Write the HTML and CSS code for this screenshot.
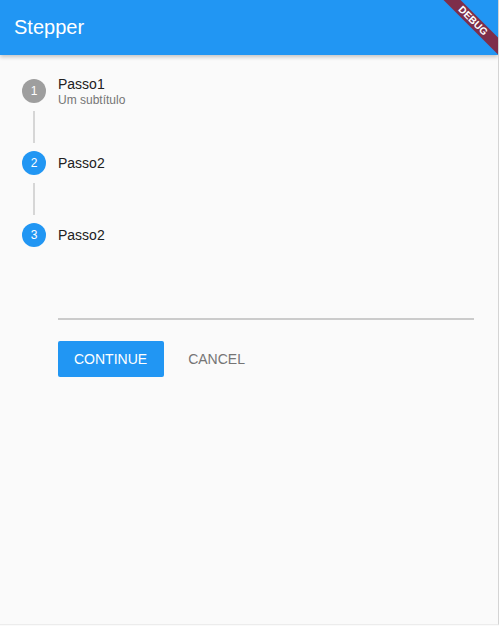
FILE: index.html
```html
<!DOCTYPE html>
<html>
<head>
<meta charset="utf-8">
<link rel="stylesheet" href="styles.css">
</head>
<body>
<div class="app">
  <header class="appbar">
    <span class="title">Stepper</span>
    <div class="banner"><span>DEBUG</span></div>
  </header>
  <main class="stepper">
    <div class="step">
      <div class="head">
        <div class="circle grey">1</div>
        <div class="labels">
          <div class="step-title">Passo1</div>
          <div class="step-sub">Um subtítulo</div>
        </div>
      </div>
      <div class="connector"><div class="line"></div></div>
    </div>
    <div class="step">
      <div class="head">
        <div class="circle">2</div>
        <div class="labels">
          <div class="step-title">Passo2</div>
        </div>
      </div>
      <div class="connector"><div class="line"></div></div>
    </div>
    <div class="step">
      <div class="head">
        <div class="circle">3</div>
        <div class="labels">
          <div class="step-title">Passo2</div>
        </div>
      </div>
      <div class="content">
        <div class="field"></div>
        <div class="controls">
          <button class="btn primary">CONTINUE</button>
          <button class="btn flat">CANCEL</button>
        </div>
      </div>
    </div>
  </main>
</div>
</body>
</html>
```
FILE: styles.css
```css
* { box-sizing: border-box; }
html, body { margin: 0; padding: 0; }
body {
  background: #fafafa;
  font-family: "Liberation Sans", Arial, sans-serif;
  width: 499px;
  height: 626px;
  overflow: hidden;
}
.app {
  width: 499px;
  height: 625px;
  background: #fafafa;
  border-right: 1px solid #d4d4d4;
  border-bottom: 1px solid #ececec;
  position: relative;
  overflow: hidden;
}
.appbar {
  height: 55px;
  background: #2196f3;
  display: flex;
  align-items: center;
  padding-left: 14px;
  box-shadow: 0 2px 4px rgba(0,0,0,0.22);
  position: relative;
  z-index: 2;
  overflow: hidden;
}
.title {
  color: #fff;
  font-size: 20px;
  padding-bottom: 1px;
}
.banner {
  position: absolute;
  top: 0;
  right: 0;
  width: 100px;
  height: 100px;
  overflow: hidden;
}
.banner span {
  position: absolute;
  width: 110px;
  height: 12px;
  line-height: 12px;
  top: 15px;
  left: 20px;
  transform: rotate(45deg);
  background: #7e2e4a;
  color: #fff;
  font-size: 10px;
  font-weight: bold;
  text-align: center;
  letter-spacing: 0.2px;
}
.stepper {
  padding-top: 24px;
}
.head {
  height: 24px;
  display: flex;
  align-items: center;
  padding-left: 22px;
}
.circle {
  width: 24px;
  height: 24px;
  border-radius: 50%;
  background: #2196f3;
  color: #fff;
  font-size: 12px;
  display: flex;
  align-items: center;
  justify-content: center;
  flex-shrink: 0;
}
.circle.grey { background: #9e9e9e; }
.labels {
  margin-left: 12px;
  display: flex;
  flex-direction: column;
}
.step-title {
  font-size: 14px;
  line-height: 18px;
  color: #212121;
}
.step-sub {
  font-size: 12px;
  line-height: 14px;
  color: #757575;
}
.connector {
  height: 48px;
  padding: 8px 0 8px 33px;
}
.line {
  width: 2px;
  height: 32px;
  background: #d6d6d6;
}
.content {
  margin-left: 58px;
  margin-right: 24px;
}
.field {
  height: 73px;
  border-bottom: 2px solid #cbcbcb;
}
.controls {
  margin-top: 15px;
  height: 48px;
  display: flex;
  align-items: center;
  gap: 8px;
}
.btn {
  height: 36px;
  padding: 0 17px 0 16px;
  border: none;
  border-radius: 2px;
  font-family: "Liberation Sans", Arial, sans-serif;
  font-size: 14px;
  cursor: pointer;
}
.btn.primary {
  background: #2196f3;
  color: #fff;
}
.btn.flat {
  background: transparent;
  color: #757575;
}
```
